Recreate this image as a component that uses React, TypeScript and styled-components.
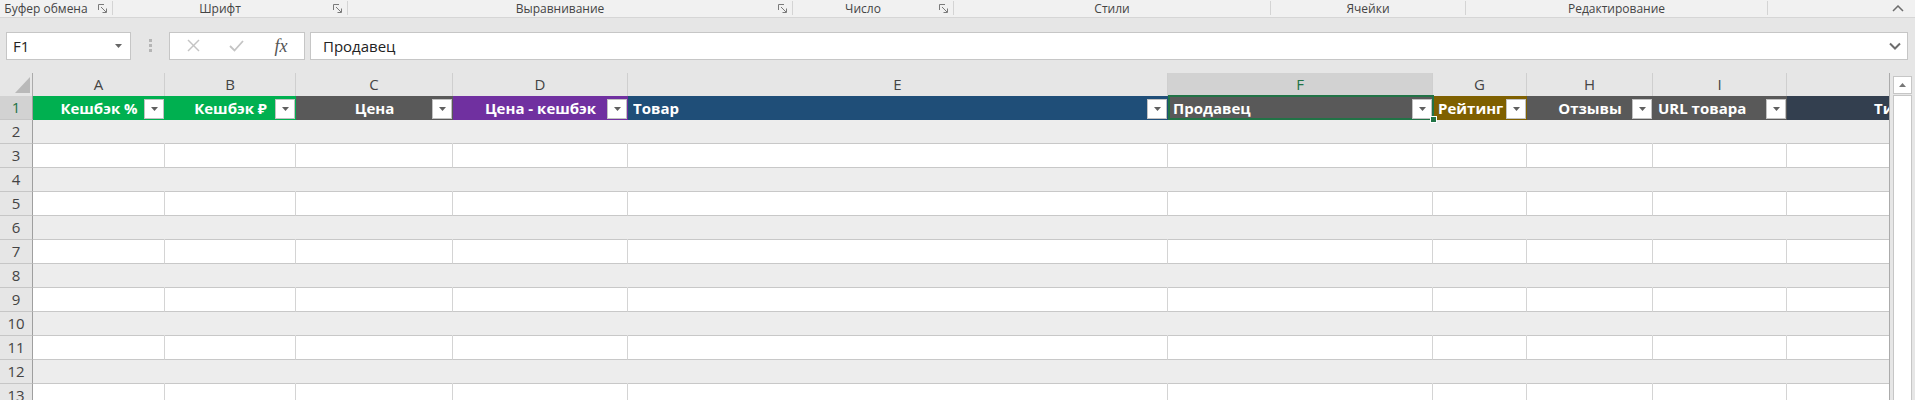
import React from "react";
import styled, { createGlobalStyle } from "styled-components";

const GlobalStyle = createGlobalStyle`
  html, body {
    margin: 0;
    padding: 0;
    background: #e6e6e6;
    overflow: hidden;
  }
  body {
    font-family: "Open Sans", "Noto Sans", sans-serif;
  }
`;

interface GroupType {
  label: string;
  width: number;
  launcher: boolean;
}

interface ColumnType {
  key: string;
  width: number;
  title: string;
  color: string;
  align: "left" | "center";
}

const groups: Array<GroupType> = [
  { label: "Буфер обмена", width: 113, launcher: true },
  { label: "Шрифт", width: 235, launcher: true },
  { label: "Выравнивание", width: 445, launcher: true },
  { label: "Число", width: 161, launcher: true },
  { label: "Стили", width: 317, launcher: false },
  { label: "Ячейки", width: 195, launcher: false },
  { label: "Редактирование", width: 302, launcher: false },
];

const columns: Array<ColumnType> = [
  { key: "A", width: 132, title: "Кешбэк %", color: "#00b050", align: "center" },
  { key: "B", width: 131, title: "Кешбэк ₽", color: "#00b050", align: "center" },
  { key: "C", width: 157, title: "Цена", color: "#595959", align: "center" },
  { key: "D", width: 175, title: "Цена - кешбэк", color: "#7030a0", align: "center" },
  { key: "E", width: 540, title: "Товар", color: "#1f4e78", align: "left" },
  { key: "F", width: 265, title: "Продавец", color: "#595959", align: "left" },
  { key: "G", width: 94, title: "Рейтинг", color: "#7f6000", align: "left" },
  { key: "H", width: 126, title: "Отзывы", color: "#595959", align: "center" },
  { key: "I", width: 134, title: "URL товара", color: "#595959", align: "left" },
  { key: "J", width: 262, title: "Тип товара", color: "#333f4f", align: "center" },
];

const SELECTED = "F";
const TEMPLATE = `33px ${columns.map(c => `${c.width}px`).join(" ")}`;
const dataRows = [2, 3, 4, 5, 6, 7, 8, 9, 10, 11, 12, 13];

const Page = styled.div`
  width: 1915px;
  height: 400px;
  overflow: hidden;
  display: flex;
  flex-direction: column;
`;

const RibbonBar = styled.div`
  display: flex;
  height: 17px;
  background: #f1f1f1;
  border-bottom: 1px solid #d6d6d6;
`;

const Group = styled.div<{ width: number }>`
  display: flex;
  align-items: center;
  width: ${props => props.width}px;
  height: 14px;
  box-sizing: border-box;
  border-right: 1px solid #d4d4d4;
  margin-top: 1px;
`;

const GroupLabel = styled.span`
  flex: 1;
  text-align: center;
  font-size: 12px;
  line-height: 15px;
  color: #444;
  white-space: nowrap;
`;

const Launcher = styled.span`
  width: 20px;
  display: flex;
  justify-content: center;
  align-items: center;
`;

const CollapseBox = styled.div`
  flex: 1;
  display: flex;
  justify-content: flex-end;
  align-items: center;
  padding-right: 11px;
`;

const FormulaRow = styled.div`
  display: flex;
  align-items: center;
  height: 55px;
  padding: 0 7px 0 6px;
`;

const Box = styled.div`
  display: flex;
  align-items: center;
  height: 28px;
  box-sizing: border-box;
  background: #fff;
  border: 1px solid #c6c6c6;
`;

const NameBox = styled(Box)`
  width: 125px;
  padding: 0 8px 0 6px;
  justify-content: space-between;
  font-size: 15px;
  color: #222;
`;

const Dots = styled.div`
  width: 38px;
  display: flex;
  justify-content: center;
`;

const ButtonsBox = styled(Box)`
  display: grid;
  grid-template-columns: 46px 40px 50px;
  width: 136px;
  justify-items: center;
`;

const Fx = styled.span`
  font-family: "Liberation Serif", "DejaVu Serif", serif;
  font-style: italic;
  font-size: 18px;
  color: #555;
  line-height: 20px;
`;

const FormulaInput = styled(Box)`
  flex: 1;
  margin-left: 5px;
  padding: 0 6px 0 12px;
  justify-content: space-between;
  font-size: 15px;
  color: #222;
`;

const SheetArea = styled.div`
  display: flex;
  flex: 1;
  min-height: 0;
`;

const Grid = styled.div`
  width: 1889px;
  overflow: hidden;
  flex-shrink: 0;
`;

const Row = styled.div<{ height: number }>`
  display: grid;
  grid-template-columns: ${TEMPLATE};
  width: max-content;
  height: ${props => props.height}px;
`;

const ColHeader = styled.div<{ selected?: boolean }>`
  box-sizing: border-box;
  border-right: 1px solid #cfcfcf;
  border-bottom: 1px solid #ababab;
  background: ${props => (props.selected ? "#d2d2d2" : "#e6e6e6")};
  color: ${props => (props.selected ? "#217346" : "#444")};
  font-size: 15px;
  line-height: 22px;
  text-align: center;
`;

const Corner = styled.div`
  box-sizing: border-box;
  border-right: 1px solid #ababab;
  border-bottom: 1px solid #ababab;
  background: #e6e6e6;
`;

const RowHeader = styled.div<{ selected?: boolean }>`
  box-sizing: border-box;
  border-right: 1px solid #9f9f9f;
  border-bottom: 1px solid #c6c6c6;
  background: ${props => (props.selected ? "#d2d2d2" : "#e6e6e6")};
  color: ${props => (props.selected ? "#217346" : "#444")};
  font-size: 15px;
  line-height: 23px;
  text-align: center;
`;

const TitleCell = styled.div<{ fill: string; align: string; selected?: boolean }>`
  position: relative;
  box-sizing: border-box;
  padding: 0 5px;
  background: ${props => props.fill};
  color: #fff;
  font-weight: 700;
  font-size: 15px;
  line-height: 24px;
  text-align: ${props => props.align};
  white-space: nowrap;
  ${props =>
    props.selected &&
    `
    z-index: 2;
    &::before {
      content: "";
      position: absolute;
      left: 0;
      right: -1px;
      top: -1px;
      bottom: 0;
      border: 2px solid #217346;
      pointer-events: none;
    }
  `}
`;

const CellText = styled.span`
  display: block;
  overflow: hidden;
`;

const FilterButton = styled.span`
  position: absolute;
  right: 1px;
  top: 3px;
  width: 20px;
  height: 20px;
  box-sizing: border-box;
  background: #fff;
  border: 1px solid #c2c2c2;
  display: flex;
  align-items: center;
  justify-content: center;
`;

const FillHandle = styled.span`
  position: absolute;
  right: -4px;
  bottom: -3px;
  width: 5px;
  height: 5px;
  background: #217346;
  border: 1px solid #fff;
  z-index: 3;
`;

const DataCell = styled.div<{ band: boolean }>`
  box-sizing: border-box;
  background: ${props => (props.band ? "#ededed" : "#fff")};
  border-right: 1px solid ${props => (props.band ? "#ededed" : "#d4d4d4")};
  border-bottom: 1px solid #c8c8c8;
`;

const ScrollColumn = styled.div`
  flex: 1;
  display: flex;
  flex-direction: column;
  box-sizing: border-box;
  border-left: 1px solid #ababab;
  padding: 3px 3px 0 3px;
`;

const ScrollUp = styled.div`
  height: 18px;
  box-sizing: border-box;
  background: #fff;
  border: 1px solid #c6c6c6;
  display: flex;
  align-items: center;
  justify-content: center;
`;

const ScrollTrack = styled.div`
  flex: 1;
  margin-top: 1px;
  background: #fff;
  border: 1px solid #c6c6c6;
  border-bottom: none;
`;

const LauncherIcon = () => (
  <svg width="9" height="9" viewBox="0 0 9 9">
    <polyline points="0.5,6 0.5,0.5 6,0.5" fill="none" stroke="#7a7a7a" strokeWidth="1" />
    <line x1="3" y1="3" x2="8" y2="8" stroke="#7a7a7a" strokeWidth="1" />
    <polyline points="8.5,4.5 8.5,8.5 4.5,8.5" fill="none" stroke="#7a7a7a" strokeWidth="1" />
  </svg>
);

const SmallTriangle = ({ color, up }: { color: string; up?: boolean }) => (
  <svg width="7" height="4" viewBox="0 0 7 4">
    <polygon points={up ? "0,4 7,4 3.5,0" : "0,0 7,0 3.5,4"} fill={color} />
  </svg>
);

export default function App() {
  return (
    <Page>
      <GlobalStyle />
      <RibbonBar>
        {groups.map(group => (
          <Group key={group.label} width={group.width}>
            <GroupLabel>{group.label}</GroupLabel>
            {group.launcher && (
              <Launcher>
                <LauncherIcon />
              </Launcher>
            )}
          </Group>
        ))}
        <CollapseBox>
          <svg width="12" height="7" viewBox="0 0 12 7">
            <polyline points="1,6 6,1 11,6" fill="none" stroke="#6d6d6d" strokeWidth="1.5" />
          </svg>
        </CollapseBox>
      </RibbonBar>

      <FormulaRow>
        <NameBox>
          F1
          <SmallTriangle color="#666" />
        </NameBox>
        <Dots>
          <svg width="3" height="13" viewBox="0 0 3 13">
            <rect x="0" y="0" width="3" height="3" fill="#b5b5b5" />
            <rect x="0" y="5" width="3" height="3" fill="#b5b5b5" />
            <rect x="0" y="10" width="3" height="3" fill="#b5b5b5" />
          </svg>
        </Dots>
        <ButtonsBox>
          <svg width="13" height="13" viewBox="0 0 13 13">
            <line x1="1" y1="1" x2="12" y2="12" stroke="#c4c4c4" strokeWidth="1.4" />
            <line x1="12" y1="1" x2="1" y2="12" stroke="#c4c4c4" strokeWidth="1.4" />
          </svg>
          <svg width="15" height="12" viewBox="0 0 15 12">
            <polyline points="1,6 5.5,10.5 14,1" fill="none" stroke="#c4c4c4" strokeWidth="1.8" />
          </svg>
          <Fx>fx</Fx>
        </ButtonsBox>
        <FormulaInput>
          Продавец
          <svg width="12" height="8" viewBox="0 0 12 8">
            <polyline points="1,1.5 6,6.5 11,1.5" fill="none" stroke="#6d6d6d" strokeWidth="2" />
          </svg>
        </FormulaInput>
      </FormulaRow>

      <SheetArea>
        <Grid>
          <Row height={23}>
            <Corner>
              <svg width="32" height="22" viewBox="0 0 32 22">
                <polygon points="15,20 30,20 30,4" fill="#b9b9b9" />
              </svg>
            </Corner>
            {columns.map(col => (
              <ColHeader key={col.key} selected={col.key === SELECTED}>
                {col.key}
              </ColHeader>
            ))}
          </Row>

          <Row height={24}>
            <RowHeader selected>1</RowHeader>
            {columns.map(col => (
              <TitleCell
                key={col.key}
                fill={col.color}
                align={col.align}
                selected={col.key === SELECTED}
              >
                <CellText>{col.title}</CellText>
                {col.key !== "J" && (
                  <FilterButton>
                    <SmallTriangle color="#5f5f5f" />
                  </FilterButton>
                )}
                {col.key === SELECTED && <FillHandle />}
              </TitleCell>
            ))}
          </Row>

          {dataRows.map(n => (
            <Row key={n} height={24}>
              <RowHeader>{n}</RowHeader>
              {columns.map(col => (
                <DataCell key={col.key} band={n % 2 === 0} />
              ))}
            </Row>
          ))}
        </Grid>

        <ScrollColumn>
          <ScrollUp>
            <SmallTriangle color="#777" up />
          </ScrollUp>
          <ScrollTrack />
        </ScrollColumn>
      </SheetArea>
    </Page>
  );
}
